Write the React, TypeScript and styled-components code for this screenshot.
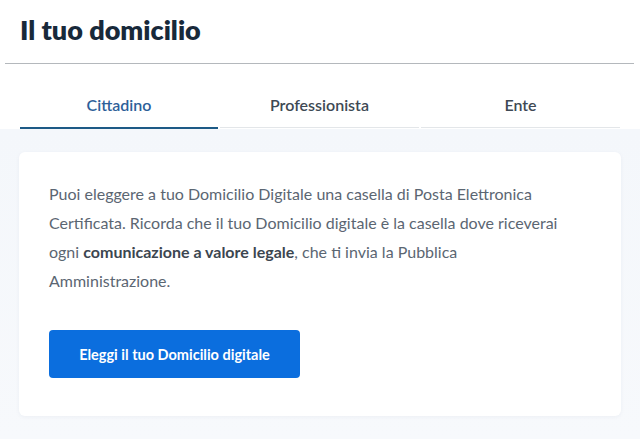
import React, { useState } from "react";
import styled, { createGlobalStyle } from "styled-components";

const GlobalStyle = createGlobalStyle`
  html, body {
    margin: 0;
    padding: 0;
    background: #ffffff;
  }
  body {
    font-family: "Lato", "Open Sans", sans-serif;
    -webkit-font-smoothing: antialiased;
  }
`;

const tabs = ["Cittadino", "Professionista", "Ente"];

export default function App() {
  const [active, setActive] = useState(0);

  return (
    <>
      <GlobalStyle />
      <Page>
        <Header>
          <Title>Il tuo domicilio</Title>
        </Header>
        <Divider />
        <TabBar>
          {tabs.map((t, i) => (
            <Tab key={t} $active={i === active} onClick={() => setActive(i)}>
              {t}
            </Tab>
          ))}
        </TabBar>
        <Content>
          <Card>
            <Text>
              Puoi eleggere a tuo Domicilio Digitale una casella di Posta Elettronica
              Certificata. Ricorda che il tuo Domicilio digitale è la casella dove riceverai
              ogni <strong>comunicazione a valore legale</strong>, che ti invia la Pubblica
              Amministrazione.
            </Text>
            <PrimaryButton>Eleggi il tuo Domicilio digitale</PrimaryButton>
          </Card>
        </Content>
      </Page>
    </>
  );
}

const Page = styled.div`
  width: 640px;
  height: 440px;
  overflow: hidden;
  background: #ffffff;
`;

const Header = styled.div`
  padding: 13px 20px 0;
  height: 49px;
  box-sizing: border-box;
`;

const Title = styled.h1`
  margin: 0;
  font-size: 27px;
  line-height: 34px;
  font-weight: 800;
  color: #18293a;
`;

const Divider = styled.hr`
  margin: 14px 6px 0 5px;
  border: 0;
  border-top: 1px solid #b4b8bc;
`;

const TabBar = styled.div`
  display: grid;
  grid-template-columns: 198px 199px 199px;
  column-gap: 2px;
  padding: 0 20px;
  margin-top: 28px;
`;

const Tab = styled.button<{ $active: boolean }>`
  background: none;
  border: 0;
  padding: 0 0 9px;
  font-family: inherit;
  font-size: 16px;
  font-weight: 600;
  line-height: 26px;
  cursor: pointer;
  color: ${(p) => (p.$active ? "#2d5f99" : "#3e4954")};
  border-bottom: ${(p) => (p.$active ? "2px solid #1d5a86" : "1px solid #e3e6e9")};
  margin-bottom: ${(p) => (p.$active ? "0" : "1px")};
`;

const Content = styled.div`
  background: linear-gradient(180deg, #f4f7fb 0%, #f7f9fc 100%);
  padding: 23px 19px 24px;
  height: 310px;
  box-sizing: border-box;
`;

const Card = styled.div`
  background: #ffffff;
  border-radius: 6px;
  box-shadow: 0 1px 4px rgba(30, 60, 100, 0.05);
  padding: 27px 30px 36px;
  height: 264px;
  box-sizing: border-box;
`;

const Text = styled.p`
  margin: 0;
  max-width: 515px;
  font-size: 16px;
  line-height: 29px;
  color: #5b6672;

  strong {
    font-weight: 700;
    color: #3c4650;
  }
`;

const PrimaryButton = styled.button`
  margin-top: 35px;
  width: 251px;
  height: 48px;
  border: 0;
  border-radius: 4px;
  background: #0b6ede;
  color: #ffffff;
  font-family: inherit;
  font-size: 14.5px;
  font-weight: 700;
  cursor: pointer;
`;
